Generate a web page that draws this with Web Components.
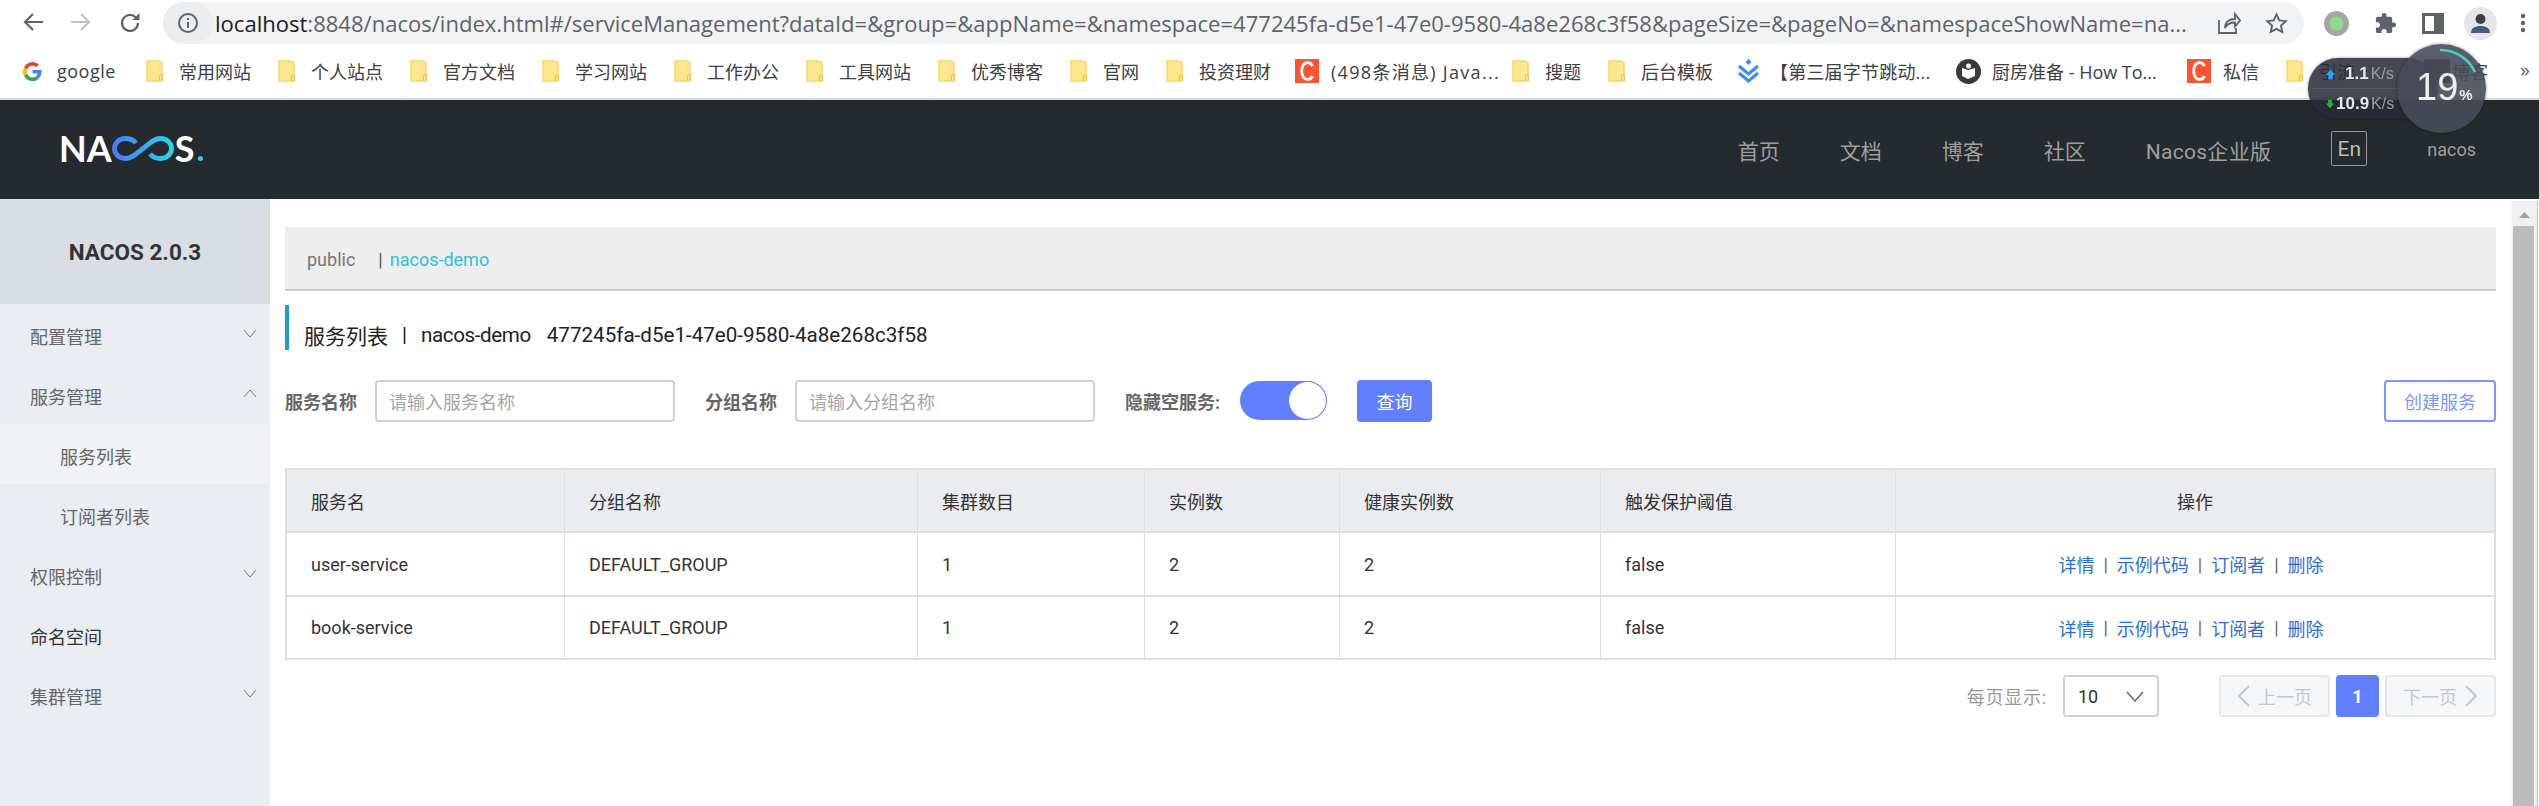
<!DOCTYPE html>
<html lang="zh">
<head>
<meta charset="utf-8">
<title>Nacos</title>
<style>
html, body { margin: 0; height: 100%; overflow: hidden; background: #fff; }
body { font-family: Roboto, "Noto Sans CJK SC", sans-serif; font-size: 18px; color: #333; }
</style>
</head>
<body>
<browser-toolbar url="localhost:8848/nacos/index.html#/serviceManagement?dataId=&group=&appName=&namespace=477245fa-d5e1-47e0-9580-4a8e268c3f58&pageSize=&pageNo=&namespaceShowName=na..."></browser-toolbar>
<bookmark-bar></bookmark-bar>
<nacos-header></nacos-header>
<app-shell>
  <side-nav slot="nav"></side-nav>
  <service-page></service-page>
</app-shell>
<speed-widget></speed-widget>

<script>
const chevronDown = `<svg width="14" height="9" viewBox="0 0 14 9" fill="none" stroke="currentColor" stroke-width="1"><path d="M1 1l6 7 6-7"/></svg>`;
const chevronUp = `<svg width="14" height="9" viewBox="0 0 14 9" fill="none" stroke="currentColor" stroke-width="1"><path d="M1 8l6-7 6 7"/></svg>`;

// 地址栏
class BrowserToolbar extends HTMLElement {
  constructor() {
    super();
    this.attachShadow({ mode: "open" });
    this.shadowRoot.innerHTML = `
<style>
:host { display: flex; align-items: center; height: 44px; box-sizing: border-box; padding: 2px 0 0 23px; background: #fff; }
svg { display: block; flex: none; }
.nav { display: flex; gap: 28px; margin-right: 22px; }
.url { display: flex; align-items: center; width: 2141px; height: 42px; border-radius: 21px; background: #f1f3f4; flex: none; }
.chip { width: 50px; height: 42px; border-radius: 21px; background: #ebedef; display: flex; align-items: center; justify-content: center; margin-right: 2px; flex: none; }
.text { font: 22.050px/42px "Open Sans", sans-serif; height: 42px; color: #5f6368; white-space: nowrap; width: 2001px; overflow: hidden; flex: none; }
.text b { font-weight: 400; color: #202124; }
.end { display: flex; gap: 24px; margin-left: 1px; align-items: center; }
.right { display: flex; align-items: center; margin-left: 20px; }
</style>
<div class="nav">
  <svg width="20" height="20" viewBox="0 0 20 20" fill="none" stroke="#5f6368" stroke-width="2.2"><path d="M20 10H2M10 2l-8 8 8 8"/></svg>
  <svg width="20" height="20" viewBox="0 0 20 20" fill="none" stroke="#bdc1c6" stroke-width="2.2"><path d="M0 10h18M10 2l8 8-8 8"/></svg>
  <svg width="22" height="22" viewBox="0 0 22 22" fill="none" stroke="#5f6368" stroke-width="2.2"><path d="M19 11a8 8 0 1 1-2.300-5.700"/><path d="M20.500 1v7h-7z" fill="#5f6368" stroke="none"/></svg>
</div>
<div class="url">
  <div class="chip"><svg width="20" height="20" viewBox="0 0 20 20" fill="none" stroke="#5f6368" stroke-width="2"><circle cx="10" cy="10" r="9"/><path d="M10 9v6M10 5v2"/></svg></div>
  <div class="text"></div>
  <div class="end">
    <svg width="24" height="24" viewBox="0 0 24 24" fill="none" stroke="#5f6368" stroke-width="1.800"><path d="M2 9v13h17v-5"/><path d="M8 17c0-6 4-9 10-9V3l5 6.500-5 6v-4c-5 0-8 1.500-10 5.500z"/></svg>
    <svg width="23" height="23" viewBox="0 0 24 24" fill="none" stroke="#5f6368" stroke-width="2"><path d="M12 2.500l2.900 6.200 6.800.8-5 4.700 1.300 6.700-6-3.300-6 3.300 1.300-6.700-5-4.700 6.800-.8z"/></svg>
  </div>
</div>
<div class="right">
  <svg width="25" height="25" viewBox="0 0 25 25" style="margin-right:25px"><circle cx="12.500" cy="12.500" r="12.500" fill="#a4a6a4"/><circle cx="12.500" cy="12.500" r="7" fill="#8fd88f"/></svg>
  <svg width="23" height="23" viewBox="0 0 24 24" fill="#5f6368" style="margin-right:25px"><path d="M20.500 11H19V7a2 2 0 0 0-2-2h-4V3.500a2.500 2.500 0 0 0-5 0V5H4a2 2 0 0 0-2 2v3.800h1.500a2.700 2.700 0 0 1 0 5.400H2V20a2 2 0 0 0 2 2h3.800v-1.500a2.700 2.700 0 0 1 5.400 0V22H17a2 2 0 0 0 2-2v-4h1.500a2.500 2.500 0 0 0 0-5z"/></svg>
  <svg width="22" height="21" viewBox="0 0 22 21" style="margin-right:20px"><path d="M0 0h22v21H0z" fill="#5f6368"/><path d="M3 3h9v15H3z" fill="#fff"/></svg>
  <svg width="33" height="33" viewBox="0 0 33 33" style="margin-right:23px"><circle cx="16.500" cy="16.500" r="16.500" fill="#e3e6ec"/><circle cx="16.500" cy="12" r="5" fill="#3c4043"/><path d="M7 26c0-5 4-7 9.500-7s9.500 2 9.500 7z" fill="#4a5a78"/></svg>
  <svg width="6" height="20" viewBox="0 0 6 20" fill="#5f6368"><circle cx="3" cy="3" r="2.200"/><circle cx="3" cy="10" r="2.200"/><circle cx="3" cy="17" r="2.200"/></svg>
</div>`;
    const url = this.getAttribute("url");
    const host = "localhost";
    const text = this.shadowRoot.querySelector(".text");
    text.innerHTML = "<b></b>";
    text.firstChild.textContent = host;
    text.appendChild(document.createTextNode(url.slice(host.length)));
  }
}

// 书签栏
class BookmarkBar extends HTMLElement {
  constructor() {
    super();
    this.attachShadow({ mode: "open" });
    const folder = `<svg width="18" height="22" viewBox="0 0 18 22"><path d="M1 1h12l3 2v18H1z" fill="#fde68f" stroke="#f5d964" stroke-width="1.500"/><path d="M13.500 21v-5a1.500 1.500 0 0 1 3 0v5" fill="none" stroke="#e8c94e" stroke-width="1"/></svg>`;
    const csdn = `<svg width="24" height="24" viewBox="0 0 24 24"><path d="M0 0h24v24H0z" fill="#fc5531"/><path d="M17.500 7A6 8.500 0 1 0 17.500 17" fill="none" stroke="#fff" stroke-width="2.800"/></svg>`;
    const google = `<svg width="19" height="19" viewBox="0 0 24 24"><path d="M23.500 12.300c0-.9-.1-1.500-.2-2.300H12v4.500h6.500a5.600 5.600 0 0 1-2.400 3.600l3.700 2.900c2.300-2.100 3.700-5.200 3.700-8.700z" fill="#4285f4"/><path d="M12 24c3.200 0 6-1.100 7.900-2.900l-3.700-2.900c-1 .7-2.400 1.200-4.200 1.200-3.200 0-5.900-2.100-6.800-5l-3.900 3A12 12 0 0 0 12 24z" fill="#34a853"/><path d="M5.200 14.400a7.300 7.300 0 0 1 0-4.700l-3.900-3a12 12 0 0 0 0 10.700z" fill="#fbbc05"/><path d="M12 4.700c1.800 0 3.400.6 4.600 1.800l3.400-3.400A12 12 0 0 0 1.300 6.700l3.900 3c.9-2.900 3.600-5 6.800-5z" fill="#ea4335"/></svg>`;
    const blue = `<svg width="23" height="24" viewBox="0 0 23 24" fill="none" stroke="#3a8bf5" stroke-width="3"><path d="M2 7l9.500 8L21 7"/><path d="M2 14l9.500 8 9.500-8"/><path d="M11.500 0l3 3-3 3-3-3z" fill="#3a8bf5" stroke="none"/></svg>`;
    const howto = `<svg width="25" height="25" viewBox="0 0 25 25"><circle cx="12.500" cy="12.500" r="12.500" fill="#3a3a3c"/><path d="M6 9l6 2 7-2v8l-7 3-6-3z" fill="#fff"/><circle cx="12.500" cy="7" r="2.500" fill="#fff"/></svg>`;
    const dark = `<div style="width:26px;height:24px;background:#3a3a3a"></div>`;
    // 图标, 文字, 文字宽度, 图标间距, 左边距, 字间距
    const items = [
      [google, "google", 62, 15, 0, 0.5],
      [folder, "常用网站", 72], [folder, "个人站点", 72], [folder, "官方文档", 72],
      [folder, "学习网站", 72], [folder, "工作办公", 72], [folder, "工具网站", 72], [folder, "优秀博客", 72],
      [folder, "官网", 36], [folder, "投资理财", 72],
      [csdn, "(498条消息) Java...", 154, 12, -3, 1.300],
      [folder, "搜题", 36], [folder, "后台模板", 72],
      [blue, "【第三届字节跳动...", 162, 10, -3, 0.2],
      [howto, "厨房准备 - How To...", 170, 11, -3, 0],
      [csdn, "私信", 36, 12, -2, 0],
      [folder, "引流", 36], [dark, "博客", 36, 2, 42, 0],
    ];
    this.shadowRoot.innerHTML = `
<style>
:host { display: flex; align-items: center; gap: 27px; height: 54px; padding-left: 23px; box-sizing: content-box; background: #fff; border-bottom: 2px solid #dadce0; white-space: nowrap; overflow: hidden; position: relative; font: 18px "Open Sans", "Noto Sans CJK SC", sans-serif; color: #3c4043; }
.item { display: flex; align-items: center; gap: 15px; flex: none; }
.item span { flex: none; }
svg { display: block; flex: none; }
.more { position: absolute; left: 2520px; top: 12px; font-size: 20px; color: #5f6368; }
</style>
${items.map(([icon, label, w, gap = 15, ml = 0, ls = 0]) => `<div class="item" style="gap:${gap}px;margin-left:${ml}px">${icon}<span style="width:${w}px;letter-spacing:${ls}px">${label}</span></div>`).join("")}
<span class="more">»</span>`;
  }
}

// 顶部导航
class NacosHeader extends HTMLElement {
  constructor() {
    super();
    this.attachShadow({ mode: "open" });
    this.shadowRoot.innerHTML = `
<style>
:host { display: flex; align-items: center; height: 99px; background: #252a2f; color: #9f9f9f; font-size: 21px; position: relative; }
.logo { display: flex; align-items: center; margin: -2px 0 0 59px; color: #fff; font: 700 36px/25px "Lato", sans-serif; height: 25px; }
.logo svg { display: block; margin: 0 1px 0 0; }
.logo i { width: 5px; height: 5px; border-radius: 50%; background: #2bd0ee; align-self: flex-end; margin-left: 3px; }
nav { margin-left: auto; display: flex; align-items: center; }
a { margin-right: 60px; }
.wide { letter-spacing: .3px; }
.en { width: 34px; height: 33px; border: 1px solid #999; border-radius: 2px; color: #bdbdbd; display: flex; align-items: center; justify-content: center; font-size: 21px; margin: -2px 60px 0 0; }
.user { font-size: 18px; margin-right: 63px; }
</style>
<div class="logo">NA<svg width="62" height="25" viewBox="0 0 62 25" fill="none"><defs><linearGradient id="g" x1="0" x2="1"><stop offset="0" stop-color="#4d7cf8"/><stop offset="1" stop-color="#2bd3ee"/></linearGradient></defs><path d="M24 7C21 3.500 17.500 2.500 13.500 2.500 7 2.500 2.500 7 2.500 12.500S7 22.500 13.500 22.500C20 22.500 24 18 31 12.500S42 2.500 48.500 2.500C55 2.500 59.500 7 59.500 12.500S55 22.500 48.500 22.500C44.500 22.500 41 21.500 38 18" stroke="url(#g)" stroke-width="4.800" /></svg>S<i></i></div>
<nav>
  <a>首页</a><a>文档</a><a>博客</a><a>社区</a><a class="wide">Nacos企业版</a>
  <div class="en">En</div>
  <div class="user">nacos</div>
</nav>`;
  }
}

class AppShell extends HTMLElement {
  constructor() {
    super();
    this.attachShadow({ mode: "open" });
    this.shadowRoot.innerHTML = `
<style>
:host { display: flex; height: 607px; overflow: hidden; }
.main { flex: 1; min-width: 0; }
.scroll { width: 26px; margin: 2px 1px 0 0; flex: none; background: #f1f1f1; border-right: 1px solid #c4c4c4; display: flex; flex-direction: column; }
.arrow { height: 25px; display: flex; align-items: center; justify-content: center; }
.thumb { flex: 1; margin: 0 3px 0 2px; background: #bcbcbc; }
</style>
<slot name="nav"></slot>
<div class="main"><slot></slot></div>
<div class="scroll">
  <div class="arrow"><svg width="11" height="6" viewBox="0 0 11 6" style="margin-top:3px"><path d="M5.500 0l5.500 6H0z" fill="#a0a0a0"/></svg></div>
  <div class="thumb"></div>
</div>`;
  }
}

// 侧边栏
class SideNav extends HTMLElement {
  constructor() {
    super();
    this.attachShadow({ mode: "open" });
    const rows = [
      ["配置管理", "down"], ["服务管理", "up"], ["服务列表", "sub on"], ["订阅者列表", "sub"],
      ["权限控制", "down"], ["命名空间", "dark"], ["集群管理", "down"],
    ];
    this.shadowRoot.innerHTML = `
<style>
:host { display: block; width: 270px; flex: none; background: #eaedf1; color: #666; }
.brand { height: 105px; background: #d9dde4; display: flex; align-items: center; justify-content: center; font-weight: 700; font-size: 22.5px; color: #333; }
.row { height: 60px; display: flex; align-items: center; padding: 4px 13px 0 30px; box-sizing: border-box; justify-content: space-between; }
.row svg { display: block; margin-top: -6px; color: #777; }
.sub { padding-left: 60px; }
.on { background: #f0f2f6; }
.dark { color: #333; }
</style>
<div class="brand">NACOS 2.0.3</div>
${rows.map(([t, k]) => `<div class="row ${k}"><span>${t}</span>${k === "down" ? chevronDown : k === "up" ? chevronUp : ""}</div>`).join("")}`;
  }
}

class TextField extends HTMLElement {
  constructor() {
    super();
    this.attachShadow({ mode: "open" });
    this.shadowRoot.innerHTML = `
<style>
:host { display: flex; align-items: center; height: 42px; box-sizing: border-box; border: 2px solid #cfd1d8; border-radius: 4px; padding-left: 12px; color: #a5a5a5; width: 300px; }
</style><slot></slot>`;
  }
}

class ActionButton extends HTMLElement {
  constructor() {
    super();
    this.attachShadow({ mode: "open" });
    this.shadowRoot.innerHTML = `
<style>
:host { display: flex; align-items: center; justify-content: center; height: 42px; box-sizing: border-box; border-radius: 4px; background: #6080ff; color: #fff; border: 2px solid #6080ff; width: 75px; font-size: 18px; }
:host([outline]) { background: #fff; color: #7a96ff; width: 112px; border-color: #7d96ff; }
</style><slot></slot>`;
  }
}

class ToggleSwitch extends HTMLElement {
  constructor() {
    super();
    this.attachShadow({ mode: "open" });
    this.shadowRoot.innerHTML = `
<style>
:host { display: flex; justify-content: flex-end; align-items: center; width: 87px; height: 39px; box-sizing: border-box; border-radius: 20px; background: #6080ff; padding-right: 1px; flex: none; margin-top: -2px; }
i { width: 37px; height: 37px; border-radius: 50%; background: #fff; display: block; }
</style><i></i>`;
  }
}

class ServiceTable extends HTMLElement {
  constructor() {
    super();
    this.attachShadow({ mode: "open" });
    const heads = ["服务名", "分组名称", "集群数目", "实例数", "健康实例数", "触发保护阈值", "操作"];
    const rows = [
      ["user-service", "DEFAULT_GROUP", "1", "2", "2", "false"],
      ["book-service", "DEFAULT_GROUP", "1", "2", "2", "false"],
    ];
    const ops = ["详情", "示例代码", "订阅者", "删除"].map((t) => `<a>${t}</a>`).join(`<span class="sep">|</span>`);
    this.shadowRoot.innerHTML = `
<style>
:host { display: grid; grid-template-columns: 278px 353px 227px 195px 261px 295px 1fr; grid-template-rows: 63px 64px 63px; border: 2px solid #dcdee3; border-bottom: 0; }
div { box-sizing: border-box; display: flex; align-items: center; padding-left: 24px; border-bottom: 2px solid #dcdee3; border-right: 1px solid #dcdee3; color: #333; white-space: nowrap; }
.h { background: #ebecf0; }
.op { justify-content: center; padding: 0; border-right: 0; }
.links { padding-right: 8px; }
a { color: #2a6fd6; }
.sep { color: #666; margin: 0 9px; }
</style>
${heads.map((h, i) => `<div class="h ${i === 6 ? "op" : ""}">${h}</div>`).join("")}
${rows.map((r) => r.map((c) => `<div>${c}</div>`).join("") + `<div class="op links">${ops}</div>`).join("")}`;
  }
}

class PagerBar extends HTMLElement {
  constructor() {
    super();
    this.attachShadow({ mode: "open" });
    this.shadowRoot.innerHTML = `
<style>
:host { display: flex; align-items: center; justify-content: flex-end; color: #999; }
.label { letter-spacing: .8px; }
.sel { width: 96px; height: 42px; box-sizing: border-box; border: 2px solid #cfd1d8; border-radius: 4px; margin: 0 60px 0 16px; display: flex; align-items: center; justify-content: space-between; padding: 0 13px; color: #333; }
.btn { height: 42px; box-sizing: border-box; display: flex; align-items: center; justify-content: center; gap: 8px; border: 2px solid #e6e7eb; border-radius: 4px; background: #f6f7f9; color: #c4c6cf; width: 111px; }
.cur { width: 43px; margin: 0 6px; background: #6080ff; border-color: #6080ff; color: #fff; font-weight: 700; }
</style>
<span class="label">每页显示:</span>
<div class="sel"><span>10</span><svg width="18" height="11" viewBox="0 0 18 11" fill="none" stroke="#666" stroke-width="1.500"><path d="M1 1l8 9 8-9"/></svg></div>
<div class="btn"><svg width="13" height="22" viewBox="0 0 13 22" fill="none" stroke="#c4c6cf" stroke-width="2"><path d="M12 1L2 11l10 10"/></svg>上一页</div>
<div class="btn cur">1</div>
<div class="btn">下一页<svg width="13" height="22" viewBox="0 0 13 22" fill="none" stroke="#c4c6cf" stroke-width="2"><path d="M1 1l10 10L1 21"/></svg></div>`;
  }
}

// 服务列表页面
class ServicePage extends HTMLElement {
  constructor() {
    super();
    this.attachShadow({ mode: "open" });
    this.shadowRoot.innerHTML = `
<style>
:host { display: block; padding: 28px 15px 0 15px; }
.crumb { height: 60px; padding: 2px 0 0 22px; background: #eee; border-bottom: 2px solid #ccc; display: flex; align-items: center; color: #777; }
.crumb span { margin-left: 23px; color: #555; }
.crumb em { font-style: normal; color: #2bc1dd; margin-left: 7px; }
.title { height: 31px; padding: 14px 0 0 15px; margin-top: 14px; border-left: 4px solid #209bd8; display: flex; align-items: center; font-size: 20.600px; color: #222; white-space: nowrap; }
.title b { font-weight: 400; font-size: 21px; }
.title i { font-style: normal; margin: 0 14px; }
.title s { text-decoration: none; letter-spacing: -.4px; }
.title u { text-decoration: none; margin-left: 16px; }
.form { display: flex; align-items: center; margin-top: 30px; height: 42px; }
label { font-weight: 700; color: #666; white-space: nowrap; }
.l1 { margin-right: 18px; }
.l2 { margin: 0 18px 0 30px; }
.l3 { margin: 0 20px 0 30px; }
action-button[outline] { margin-left: auto; }
action-button:not([outline]) { margin-left: 30px; }
service-table { margin-top: 46px; }
pager-bar { margin-top: 15px; }
</style>
<div class="crumb">public<span>|</span><em>nacos-demo</em></div>
<div class="title"><b>服务列表</b><i>|</i><s>nacos-demo</s><u>477245fa-d5e1-47e0-9580-4a8e268c3f58</u></div>
<div class="form">
  <label class="l1">服务名称</label><text-field>请输入服务名称</text-field>
  <label class="l2">分组名称</label><text-field>请输入分组名称</text-field>
  <label class="l3">隐藏空服务:</label><toggle-switch></toggle-switch>
  <action-button>查询</action-button>
  <action-button outline>创建服务</action-button>
</div>
<service-table></service-table>
<pager-bar></pager-bar>`;
  }
}

// 网速悬浮窗
class SpeedWidget extends HTMLElement {
  constructor() {
    super();
    this.attachShadow({ mode: "open" });
    this.shadowRoot.innerHTML = `
<style>
:host { display: block; position: fixed; left: 2308px; top: 44px; width: 178px; height: 89px; font-family: "Liberation Sans", sans-serif; color: #e8e8ec; }
.pill { position: absolute; left: 0; top: 14px; width: 130px; height: 61px; border-radius: 30px; background: rgba(40,42,54,.86); box-shadow: 0 0 3px rgba(0,0,0,.4); }
.pill hr { position: absolute; left: 4px; right: 0; top: 30px; margin: 0; border: 0; height: 1px; background: rgba(255,255,255,.08); }
.line { position: absolute; display: flex; align-items: baseline; font-weight: 700; font-size: 17px; white-space: nowrap; }
.line small { font-size: 16px; font-weight: 400; color: #9a9ca6; margin-left: 2px; }
.line svg { align-self: center; }
.ring { position: absolute; left: 89px; top: 0; width: 89px; height: 89px; border-radius: 50%; background: rgba(72,75,90,.9); box-shadow: 0 0 3px rgba(0,0,0,.5); }
.ring svg { position: absolute; left: 0; top: 0; }
.val { position: absolute; left: 19px; top: 23px; font-size: 38px; line-height: 40px; color: #eee; white-space: nowrap; }
.val small { font-size: 15px; font-weight: 700; margin-left: 1px; }
</style>
<div class="pill">
  <hr>
  <div class="line" style="top:6px;left:17px"><svg width="11" height="13" viewBox="0 0 13 13"><path d="M6.500 1L12 7H9v5H4V7H1z" fill="#2aa4ee"/></svg><span style="margin-left:9px">1.1</span><small>K/s</small></div>
  <div class="line" style="top:36px;left:17px"><svg width="10" height="12" viewBox="0 0 13 13" style="margin-right:1px"><path d="M6.500 12L12 6H9V1H4v5H1z" fill="#22b53a"/></svg>10.9<small>K/s</small></div>
</div>
<div class="ring">
  <svg width="89" height="89" viewBox="0 0 89 89" fill="none"><path d="M43 6a38 38 0 0 1 35 22" stroke="#3fd5c5" stroke-width="2.500"/></svg>
  <div class="val">19<small>%</small></div>
</div>`;
  }
}

customElements.define("browser-toolbar", BrowserToolbar);
customElements.define("bookmark-bar", BookmarkBar);
customElements.define("nacos-header", NacosHeader);
customElements.define("app-shell", AppShell);
customElements.define("side-nav", SideNav);
customElements.define("text-field", TextField);
customElements.define("action-button", ActionButton);
customElements.define("toggle-switch", ToggleSwitch);
customElements.define("service-table", ServiceTable);
customElements.define("pager-bar", PagerBar);
customElements.define("service-page", ServicePage);
customElements.define("speed-widget", SpeedWidget);
</script>
</body>
</html>
